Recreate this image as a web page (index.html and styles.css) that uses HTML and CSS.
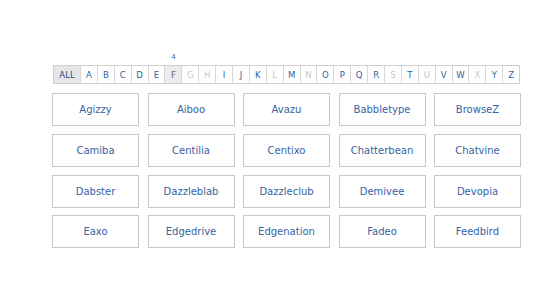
FILE: index.html
```html
<!DOCTYPE html>
<html>
<head>
<meta charset="utf-8">
<link rel="stylesheet" href="styles.css">
</head>
<body>
<div class="wrap">
  <div class="nav">
    <span class="cell all active">ALL</span>
    <span class="cell">A</span>
    <span class="cell">B</span>
    <span class="cell">C</span>
    <span class="cell">D</span>
    <span class="cell">E</span>
    <span class="cell current">F<span class="count">4</span></span>
    <span class="cell off">G</span>
    <span class="cell off">H</span>
    <span class="cell">I</span>
    <span class="cell">J</span>
    <span class="cell">K</span>
    <span class="cell off">L</span>
    <span class="cell">M</span>
    <span class="cell off">N</span>
    <span class="cell">O</span>
    <span class="cell">P</span>
    <span class="cell">Q</span>
    <span class="cell">R</span>
    <span class="cell off">S</span>
    <span class="cell">T</span>
    <span class="cell off">U</span>
    <span class="cell">V</span>
    <span class="cell">W</span>
    <span class="cell off">X</span>
    <span class="cell">Y</span>
    <span class="cell">Z</span>
  </div>
  <div class="grid">
    <div class="card">Agizzy</div>
    <div class="card">Aiboo</div>
    <div class="card">Avazu</div>
    <div class="card">Babbletype</div>
    <div class="card">BrowseZ</div>
    <div class="card">Camiba</div>
    <div class="card">Centilia</div>
    <div class="card">Centixo</div>
    <div class="card">Chatterbean</div>
    <div class="card">Chatvine</div>
    <div class="card">Dabster</div>
    <div class="card">Dazzleblab</div>
    <div class="card">Dazzleclub</div>
    <div class="card">Demivee</div>
    <div class="card">Devopia</div>
    <div class="card">Eaxo</div>
    <div class="card">Edgedrive</div>
    <div class="card">Edgenation</div>
    <div class="card">Fadeo</div>
    <div class="card">Feedbird</div>
  </div>
</div>
</body>
</html>
```
FILE: styles.css
```css
html, body {
  margin: 0;
  padding: 0;
  background: #fff;
}
body {
  font-family: "DejaVu Sans", Verdana, sans-serif;
}
.wrap {
  width: 469px;
  margin-left: 52px;
  padding-top: 65px;
}
.nav {
  display: flex;
  margin-left: 1px;
  width: 467px;
  height: 19px;
  border: 1px solid #d0d0d0;
  box-sizing: border-box;
}
.cell {
  position: relative;
  flex: 1 1 0;
  display: flex;
  align-items: center;
  justify-content: center;
  font-size: 8.5px;
  color: #2f5f9e;
  border-left: 1px solid #d8d8d8;
}
.cell:first-child {
  border-left: none;
}
.cell.all {
  flex: 0 0 26px;
  background: #e6e6e6;
  color: #2f4f88;
}
.cell.current {
  background: #ececec;
  color: #666;
}
.cell.off {
  color: #c8c8c8;
}
.count {
  position: absolute;
  top: -13px;
  left: 0;
  right: 0;
  text-align: center;
  font-size: 7px;
  color: #3f5f8f;
}
.grid {
  display: grid;
  grid-template-columns: repeat(5, 87px);
  grid-auto-rows: 33px;
  column-gap: 8.5px;
  row-gap: 7.8px;
  margin-top: 9px;
}
.card {
  box-sizing: border-box;
  border: 1px solid #c8c8c8;
  display: flex;
  align-items: center;
  justify-content: center;
  font-size: 10px;
  color: #3563a3;
}
```
